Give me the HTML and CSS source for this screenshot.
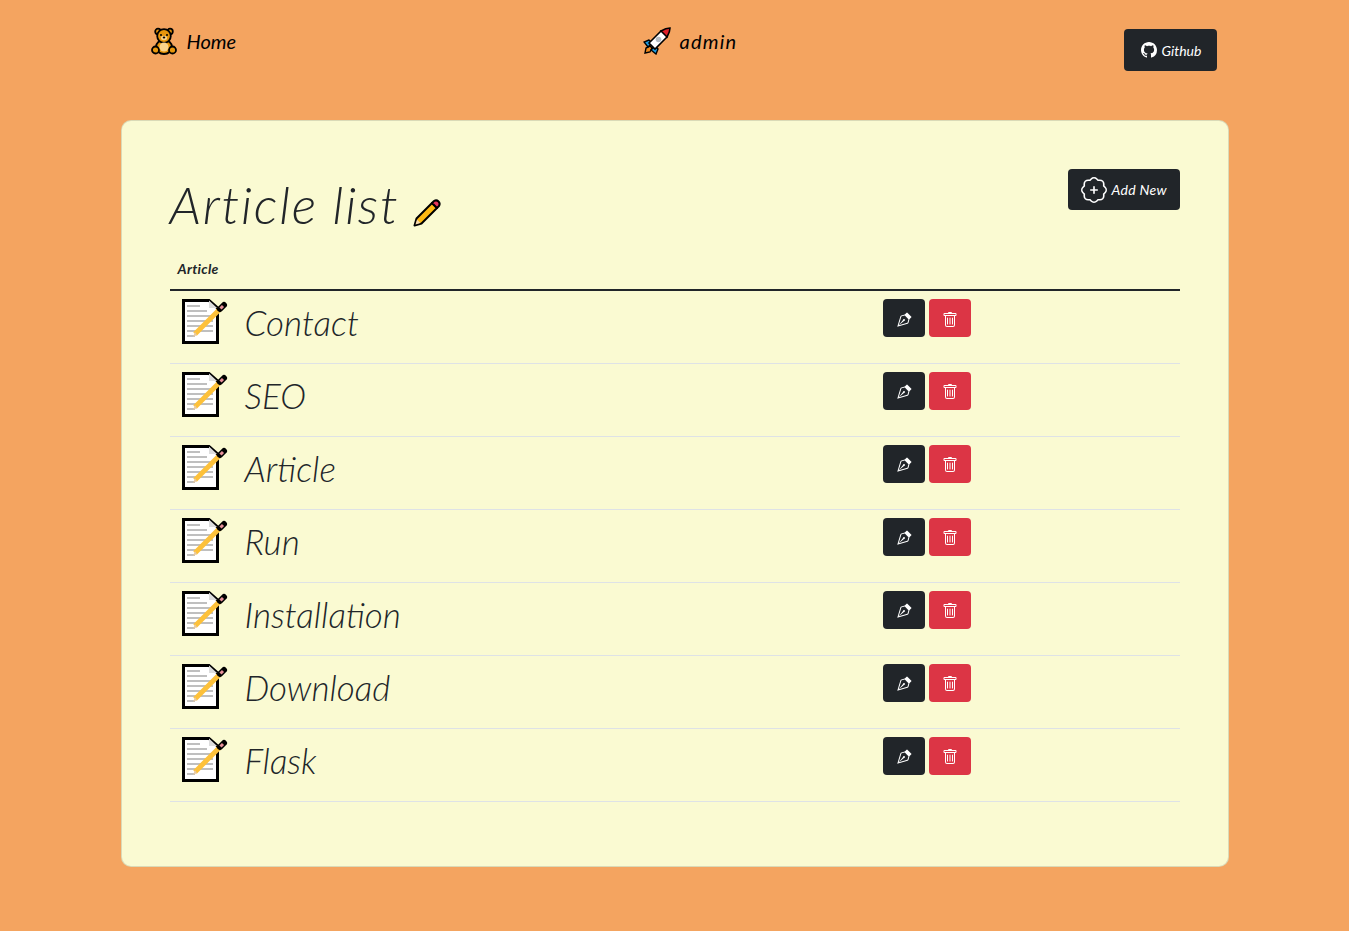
FILE: index.html
```html
<!DOCTYPE html>
<html lang="en">
  <head>
    <meta charset="UTF-8">
    <title>Article list</title>
    <link rel="stylesheet" href="styles.css">
  </head>
  <body>
    <nav class="topbar">
      <a class="nav-link nav-home">
        <svg class="nav-icon" viewBox="0 0 28 28">
          <g stroke="#000" stroke-width="1.8" fill="#e8960c">
            <circle cx="8" cy="4.500" r="2.800"/>
            <circle cx="20" cy="4.500" r="2.800"/>
            <ellipse cx="14" cy="20" rx="8" ry="7"/>
            <circle cx="5.500" cy="23" r="3.500"/>
            <circle cx="22.500" cy="23" r="3.500"/>
            <circle cx="14" cy="9" r="6.800"/>
          </g>
          <ellipse cx="14" cy="20" rx="4.500" ry="4.500" fill="#fbd38a"/>
          <ellipse cx="14" cy="11" rx="3" ry="2.200" fill="#fbd38a"/>
          <circle cx="11" cy="8" r="1"/>
          <circle cx="17" cy="8" r="1"/>
          <ellipse cx="14" cy="10.500" rx="1.300" ry="0.900"/>
        </svg>
        <span>Home</span>
      </a>
      <a class="nav-link nav-admin">
        <svg class="nav-icon" viewBox="0 0 28 28">
          <path d="M7 19 L3 21 L2 26 L7 25 L9 21 Z" fill="#f08a1c" stroke="#000" stroke-width="1.400"/>
          <path d="M6 13 L1 15 L5 20 L9 16 Z" fill="#1d9be0" stroke="#000" stroke-width="1.400"/>
          <path d="M15 22 L13 27 L8 23 L12 19 Z" fill="#1d9be0" stroke="#000" stroke-width="1.400"/>
          <path d="M6 16 L18 4 L24 4 L24 10 L12 22 Z" fill="#fff" stroke="#000" stroke-width="1.600"/>
          <path d="M18 4 Q23 1 27 1 Q27 5 24 10 Z" fill="#e0202a" stroke="#000" stroke-width="1.600"/>
          <circle cx="15.500" cy="12.500" r="2.800" fill="#b5bcc4"/>
        </svg>
        <span>admin</span>
      </a>
      <a class="btn btn-dark github-btn">
        <svg class="gh-icon" viewBox="0 0 16 16" fill="#fff"><path d="M8 0C3.58 0 0 3.58 0 8c0 3.54 2.29 6.53 5.47 7.59.4.07.55-.17.55-.38 0-.19-.01-.82-.01-1.49-2.01.37-2.53-.49-2.69-.94-.09-.23-.48-.94-.82-1.13-.28-.15-.68-.52-.01-.53.63-.01 1.08.58 1.23.82.72 1.21 1.87.87 2.33.66.07-.52.28-.87.51-1.07-1.78-.2-3.64-.89-3.64-3.95 0-.87.31-1.59.82-2.15-.08-.2-.36-1.02.08-2.12 0 0 .67-.21 2.2.82.64-.18 1.32-.27 2-.27s1.36.09 2 .27c1.53-1.04 2.2-.82 2.2-.82.44 1.1.16 1.92.08 2.12.51.56.82 1.27.82 2.15 0 3.07-1.87 3.75-3.65 3.95.29.25.54.73.54 1.48 0 1.07-.01 1.93-.01 2.2 0 .21.15.46.55.38A8.01 8.01 0 0 0 16 8c0-4.42-3.58-8-8-8z"/></svg>
        <span>Github</span>
      </a>
    </nav>

    <main class="card">
      <div class="card-head">
        <h1 class="page-title">Article list
          <svg class="title-icon" viewBox="0 0 30 30">
            <path d="M4.500 20.500 L20 5 L25 10 L9.500 25.500 L2.500 27.500 Z" fill="#fdb913" stroke="#000" stroke-width="2" stroke-linejoin="round"/>
            <path d="M20 5 L22 3 Q24.500 1.500 26.500 3.500 Q28.500 5.500 27 8 L25 10 Z" fill="#e8365d" stroke="#000" stroke-width="2" stroke-linejoin="round"/>
            <path d="M5 21.500 L8.500 25 L3.500 26.500 Z" fill="#f3d9b0"/>
          </svg>
        </h1>
        <a class="btn btn-dark add-btn">
          <svg class="add-icon" viewBox="0 0 16 16" fill="#fff">
            <path fill-rule="evenodd" d="M8 5.500a.5.5 0 0 1 .5.5v1.500H10a.5.5 0 0 1 0 1H8.500V10a.5.5 0 0 1-1 0V8.500H6a.5.5 0 0 1 0-1h1.500V6a.5.5 0 0 1 .5-.5z"/>
            <path d="m10.273 2.513-.921-.944.715-.698.622.637.89-.011a2.890 2.890 0 0 1 2.924 2.924l-.01.89.636.622a2.890 2.890 0 0 1 0 4.134l-.637.622.011.89a2.890 2.890 0 0 1-2.924 2.924l-.89-.01-.622.636a2.890 2.890 0 0 1-4.134 0l-.622-.637-.89.011a2.890 2.890 0 0 1-2.924-2.924l.01-.89-.636-.622a2.890 2.890 0 0 1 0-4.134l.637-.622-.011-.89a2.890 2.890 0 0 1 2.924-2.924l.89.01.622-.636a2.890 2.890 0 0 1 4.134 0l-.715.698a1.890 1.890 0 0 0-2.704 0l-.92.944-1.32-.016a1.890 1.890 0 0 0-1.911 1.912l.016 1.318-.944.921a1.890 1.890 0 0 0 0 2.704l.944.92-.016 1.32a1.890 1.890 0 0 0 1.912 1.911l1.318-.016.921.944a1.890 1.890 0 0 0 2.704 0l.92-.944 1.32.016a1.890 1.890 0 0 0 1.911-1.912l-.016-1.318.944-.921a1.890 1.890 0 0 0 0-2.704l-.944-.92.016-1.320a1.890 1.890 0 0 0-1.912-1.911l-1.318.016z"/>
          </svg>
          <span>Add New</span>
        </a>
      </div>

      <table class="article-table">
        <thead>
          <tr><th class="col-name">Article</th><th></th></tr>
        </thead>
        <tbody id="rows"></tbody>
      </table>
    </main>

    <script src="app.js"></script>
  </body>
</html>
```

FILE: styles.css
```css
* {
    box-sizing: border-box;
}

body {
    margin: 0;
    min-height: 931px;
    background-color: #f4a460;
    font-family: "Lato", "Open Sans", sans-serif;
    font-style: italic;
    font-weight: 300;
    color: #212529;
}

.topbar {
    width: 1108px;
    margin: 0 auto;
    height: 120px;
    display: flex;
    align-items: flex-start;
}

.nav-link {
    display: flex;
    align-items: center;
    gap: 9px;
    color: #000;
    font-size: 20px;
    font-weight: 400;
    margin-top: 26px;
    height: 30px;
}

.nav-home {
    margin-left: 29px;
    width: 493px;
}

.nav-admin {
    width: 481px;
    letter-spacing: 1.2px;
}

.nav-icon {
    width: 28px;
    height: 28px;
}

.btn {
    display: inline-flex;
    align-items: center;
    border-radius: 4px;
    color: #fff;
    font-weight: 400;
}

.btn-dark {
    background-color: #212529;
}

.github-btn {
    margin-top: 29px;
    width: 93px;
    height: 42px;
    padding-left: 17px;
    gap: 5px;
    font-size: 14px;
}

.gh-icon {
    width: 16px;
    height: 16px;
}

.card {
    width: 1108px;
    height: 747px;
    margin: 0 auto;
    background-color: #fafad2;
    border: 1px solid rgba(0, 0, 0, 0.125);
    border-radius: 10px;
    padding: 48px 48px 0;
}

.card-head {
    display: flex;
    justify-content: space-between;
    align-items: flex-start;
    height: 88px;
}

.page-title {
    margin: 6px 0 0;
    font-size: 52px;
    font-weight: 300;
    letter-spacing: 1.7px;
    line-height: 58px;
    display: flex;
    align-items: center;
    gap: 13px;
}

.title-icon {
    width: 30px;
    height: 30px;
    margin-top: 17px;
}

.add-btn {
    width: 112px;
    height: 41px;
    padding-left: 13px;
    gap: 5px;
    font-size: 14px;
    letter-spacing: 0.3px;
}

.add-icon {
    width: 26px;
    height: 26px;
}

.article-table {
    width: 1010px;
    border-collapse: collapse;
}

.article-table th {
    text-align: left;
    font-size: 14px;
    font-weight: 700;
    letter-spacing: 0.3px;
    height: 33px;
    padding: 0 8px 9px;
    border-bottom: 2px solid #212529;
}

.article-table td {
    height: 73px;
    padding: 8px 0 0;
    vertical-align: top;
    border-bottom: 1px solid #dee2e6;
}

.name-cell {
    width: 713px;
}

.article-name {
    display: flex;
    align-items: center;
    gap: 16px;
    margin-top: -2px;
    padding-left: 11px;
    font-size: 35px;
    height: 48px;
}

.article-name span {
    padding-top: 2px;
}

.doc-icon {
    width: 48px;
    height: 48px;
}

.actions {
    display: flex;
    gap: 4px;
}

.icon-btn {
    width: 42px;
    height: 38px;
    justify-content: center;
    padding-top: 3px;
}

.btn-red {
    background-color: #dc3545;
}

.icon-btn svg {
    width: 16px;
    height: 16px;
}
```

FILE: app.js
```js
const articles = ['Contact', 'SEO', 'Article', 'Run', 'Installation', 'Download', 'Flask'];

const docIcon = `<svg class="doc-icon" viewBox="0 0 48 48">
  <path d="M2.500 3.500 H28 L36.500 11 V45.500 H2.500 Z" fill="#fff" stroke="#000" stroke-width="3"/>
  <path d="M28 3.500 V11 H36 Z" fill="#ddd"/>
  <path d="M6 9h13M6 14h20M6 19h26M6 24h26M6 29h26M6 34h26M6 39h8" stroke="#aaa" stroke-width="1.500"/>
  <path d="M14 37 L39 12" stroke="#fdc13a" stroke-width="5"/>
  <path d="M12 40 L14 35 L16 38 Z" fill="#e8c9a0"/>
  <path d="M39 12 L43 8" stroke="#000" stroke-width="6" stroke-linecap="round"/>
  <path d="M39.500 11.500 L42 9" stroke="#e8909a" stroke-width="3"/>
</svg>`;

const penIcon = `<svg viewBox="0 0 16 16" fill="#fff">
  <path fill-rule="evenodd" d="M10.646.646a.5.5 0 0 1 .708 0l4 4a.5.5 0 0 1 0 .708l-1.902 1.902-.829 3.313a1.5 1.5 0 0 1-1.024 1.073L1.254 14.746 4.358 4.400A1.5 1.5 0 0 1 5.430 3.377l3.313-.828L10.646.646zm-1.800 2.908-3.173.793a.5.5 0 0 0-.358.342l-2.570 8.565 8.567-2.570a.5.5 0 0 0 .34-.357l.794-3.174-3.600-3.600z"/>
  <path fill-rule="evenodd" d="M2.832 13.228 8 9a1 1 0 1 0-1-1l-4.228 5.168-.026.086.086-.026z"/>
</svg>`;

const trashIcon = `<svg viewBox="0 0 16 16" fill="#fff">
  <path d="M5.500 5.500A.5.5 0 0 1 6 6v6a.5.5 0 0 1-1 0V6a.5.5 0 0 1 .5-.5zm2.500 0a.5.5 0 0 1 .5.5v6a.5.5 0 0 1-1 0V6a.5.5 0 0 1 .5-.5zm3 .5a.5.5 0 0 0-1 0v6a.5.5 0 0 0 1 0V6z"/>
  <path fill-rule="evenodd" d="M14.500 3a1 1 0 0 1-1 1H13v9a2 2 0 0 1-2 2H5a2 2 0 0 1-2-2V4h-.5a1 1 0 0 1-1-1V2a1 1 0 0 1 1-1H6a1 1 0 0 1 1-1h2a1 1 0 0 1 1 1h3.500a1 1 0 0 1 1 1v1zM4.118 4 4 4.059V13a1 1 0 0 0 1 1h6a1 1 0 0 0 1-1V4.059L11.882 4H4.118zM2.500 3V2h11v1h-11z"/>
</svg>`;

document.getElementById('rows').innerHTML = articles.map(name => `
  <tr>
    <td class="name-cell"><div class="article-name">${docIcon}<span>${name}</span></div></td>
    <td><div class="actions"><a class="btn btn-dark icon-btn">${penIcon}</a><a class="btn btn-red icon-btn">${trashIcon}</a></div></td>
  </tr>`).join('');
```
